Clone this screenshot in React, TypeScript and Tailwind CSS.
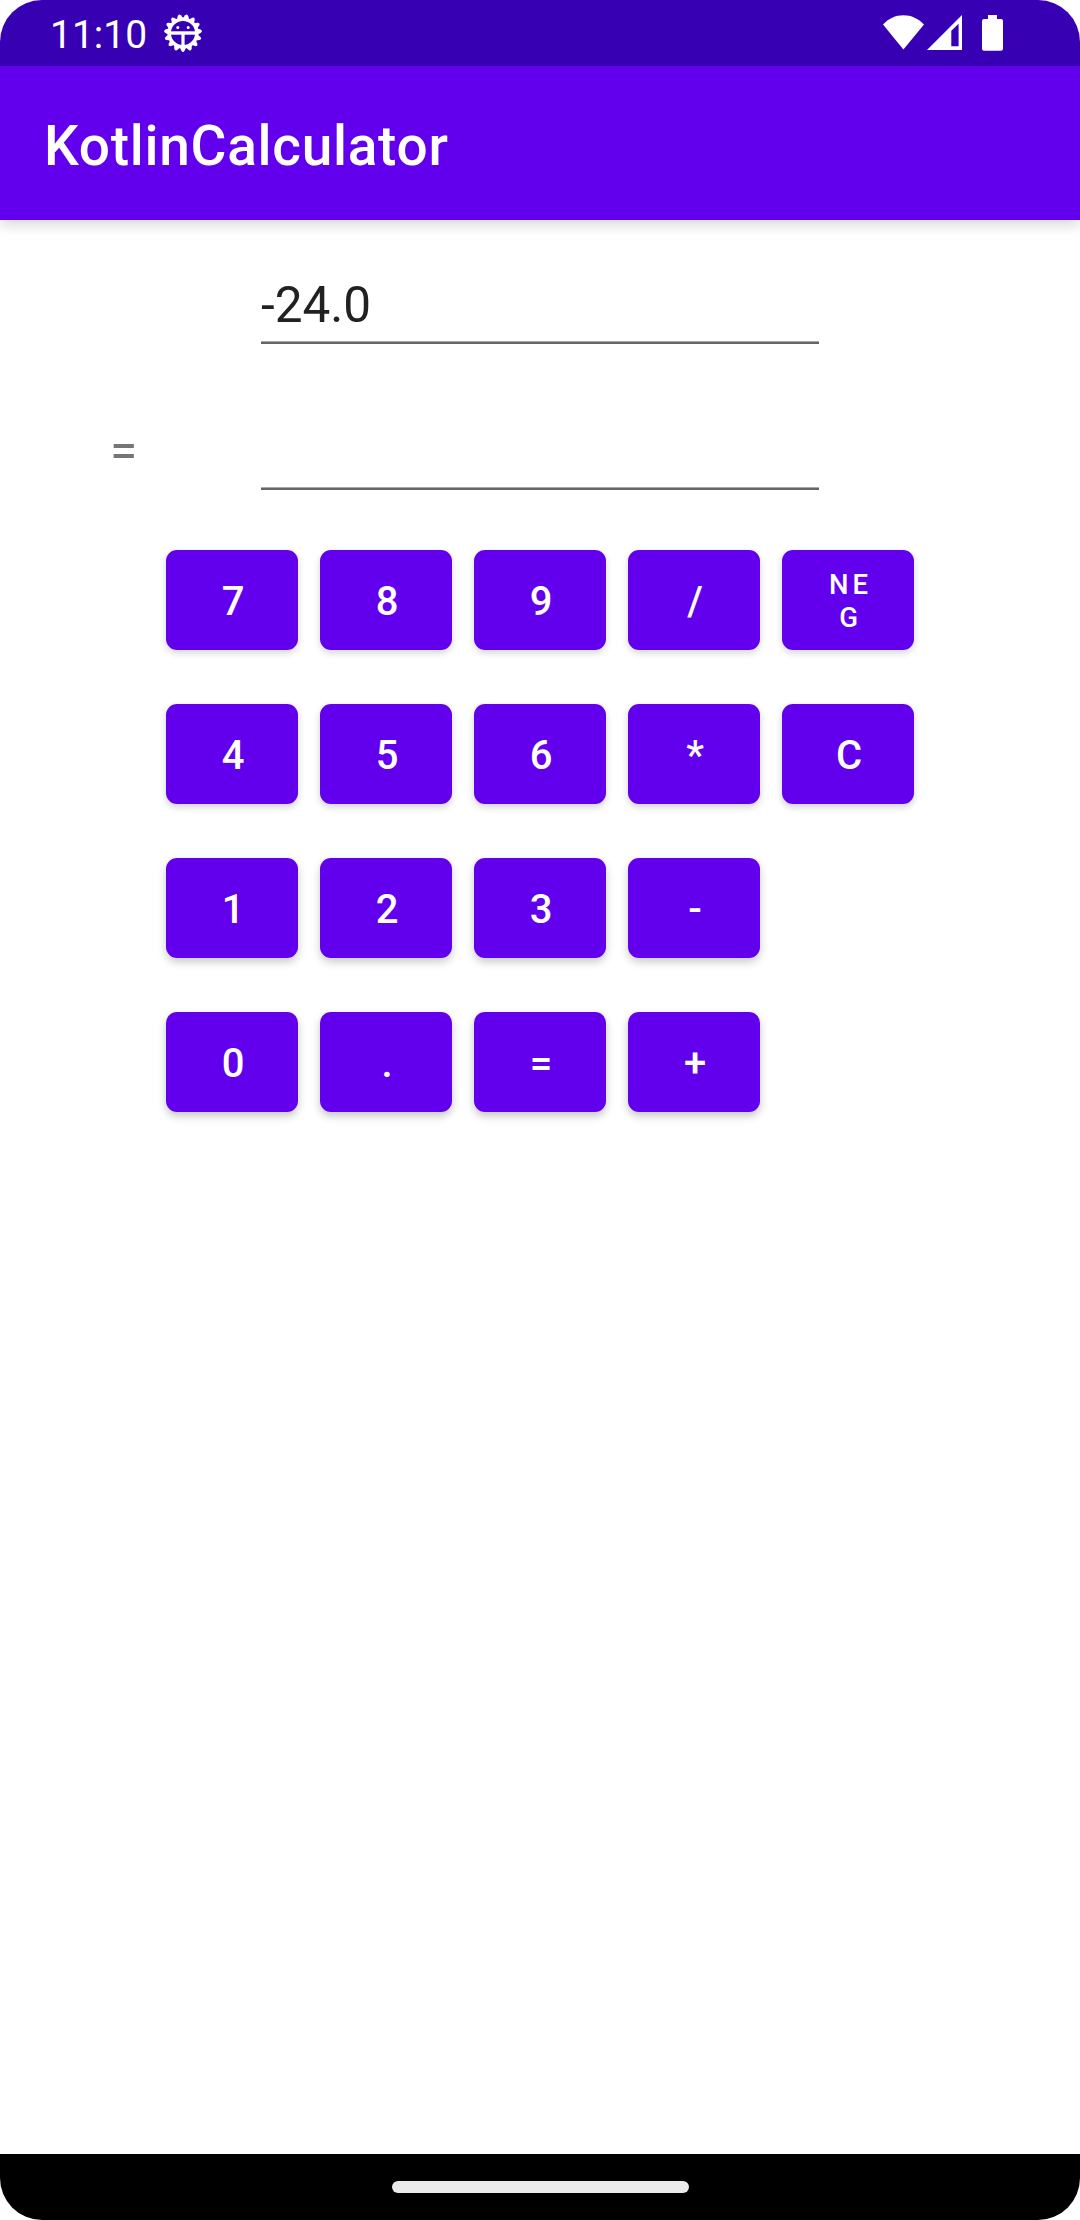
const ROWS: string[][] = [
  ["7", "8", "9", "/", "NEG"],
  ["4", "5", "6", "*", "C"],
  ["1", "2", "3", "-"],
  ["0", ".", "=", "+"],
];

// Shadows grow slightly toward the bottom of the screen, as under a fixed overhead light.
const ROW_SHADOWS = [
  "shadow-[0_3px_7px_rgba(0,0,0,0.17)]",
  "shadow-[0_3px_7px_rgba(0,0,0,0.19)]",
  "shadow-[0_4px_8px_rgba(0,0,0,0.21)]",
  "shadow-[0_4px_8px_rgba(0,0,0,0.23)]",
];

function GearBugIcon() {
  const teeth = Array.from({ length: 15 }, (_, i) => 12 + i * 24);
  return (
    <svg width="40" height="40" viewBox="-20 -20 40 40" className="shrink-0">
      {teeth.map((a) => (
        <path key={a} d="M-3.8 -13 L-1.6 -17.8 Q0 -20.2 1.6 -17.8 L3.8 -13Z" fill="white" transform={`rotate(${a})`} />
      ))}
      <circle r="13.8" fill="none" stroke="white" strokeWidth="3.4" />
      <rect x="-13" y="-1.7" width="26" height="3.4" fill="white" />
      <rect x="-1.6" y="0" width="3.2" height="14" fill="white" />
      <circle cx="-5.2" cy="-5.5" r="1.5" fill="white" />
      <circle cx="5.2" cy="-5.5" r="1.5" fill="white" />
    </svg>
  );
}

function StatusIcons() {
  return (
    <svg width="124" height="40" viewBox="880 13 124 40" fill="white">
      <path d="M903.4 49.5 L883 24.5 C888.5 18.5 895.5 15.2 903.4 15.2 C911.3 15.2 918.3 18.5 924 24.5Z" />
      <path fillRule="evenodd" d="M927 50 L962 15 V50Z M951.3 30.8 V46.3 H958.6 V23.8Z" />
      <path d="M988 19 V15 H997 V19 H1001 Q1003 19 1003 21 V48.7 Q1003 50.7 1001 50.7 H984 Q982 50.7 982 48.7 V21 Q982 19 984 19Z" />
    </svg>
  );
}

function Key({ label, shadow }: { label: string; shadow: string }) {
  const small = label.length > 1;
  return (
    <button
      className={`flex h-[100px] w-[132px] items-center justify-center rounded-[11px] bg-[#6200ee] font-medium text-white ${shadow} ${
        small ? "text-[27.5px] leading-[33px] tracking-[4px]" : "text-[40px] leading-[46px]"
      }`}
    >
      <span className={small ? "w-[52px] break-all pt-[1px] pl-[5px] text-center" : "pt-[4px] pl-[2px]"}>{label}</span>
    </button>
  );
}

export default function App() {
  return (
    <div className="h-[2220px] w-[1080px] bg-white">
      <div className="flex h-full flex-col overflow-hidden rounded-[42px] bg-white font-['Roboto',sans-serif]">
        <div className="z-20 flex h-[66px] shrink-0 items-center justify-between bg-[#3700b3] pr-[76px] pl-[50px]">
          <div className="flex items-center gap-[16px]">
            <span className="pt-[3px] text-[39px] leading-[46px] text-white">11:10</span>
            <GearBugIcon />
          </div>
          <StatusIcons />
        </div>
        <header className="z-10 flex h-[154px] shrink-0 items-center bg-[#6200ee] pl-[44px] shadow-[0_4px_14px_rgba(0,0,0,0.18)]">
          <h1 className="pt-[6px] text-[55px] leading-[64px] font-medium tracking-[0.72px] text-white">KotlinCalculator</h1>
        </header>
        <main className="flex grow flex-col">
          <div className="mt-[50px] ml-[261px] flex h-[74px] w-[558px] flex-col justify-between">
            <div className="pt-[6px] text-[49.5px] leading-[58px] text-[#212121]">-24.0</div>
            <div className="h-[3px] shrink-0 border-t border-[#aaaaaa] bg-[#666666]" />
          </div>
          <div className="flex h-[146px] items-end">
            <div className="flex h-[78px] w-[261px] items-center pl-[110px] text-[49.5px] leading-[58px] text-[#757575]">=</div>
            <div className="h-[3px] w-[558px] border-t border-[#aaaaaa] bg-[#666666]" />
          </div>
          <div className="mt-[60px] ml-[166px] flex flex-col gap-[54px]">
            {ROWS.map((row, i) => (
              <div key={i} className="flex gap-[22px]">
                {row.map((label) => (
                  <Key key={label} label={label} shadow={ROW_SHADOWS[i]} />
                ))}
              </div>
            ))}
          </div>
        </main>
        <div className="flex h-[66px] shrink-0 justify-center bg-black pt-[27px]">
          <div className="h-[12px] w-[297px] rounded-full bg-[#ebebeb]" />
        </div>
      </div>
    </div>
  );
}
